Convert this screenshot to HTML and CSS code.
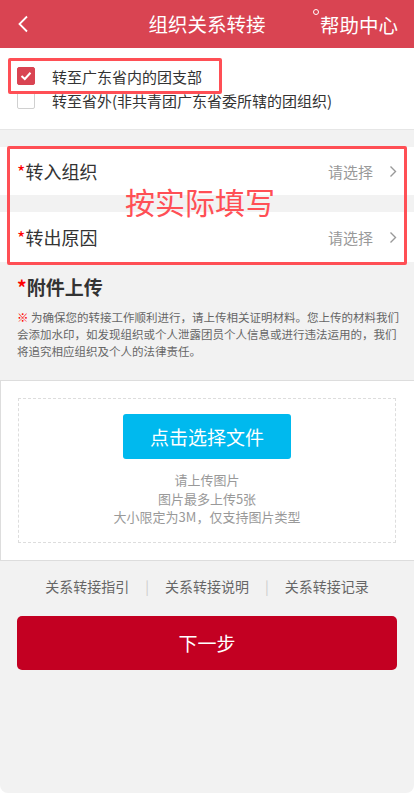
FILE: index.html
```html
<!DOCTYPE html>
<html lang="zh-CN">
<head>
<meta charset="utf-8">
<meta name="viewport" content="width=device-width, initial-scale=1">
<title>组织关系转接</title>
<link rel="stylesheet" href="styles.css">
</head>
<body>
<div class="page">
  <header class="topbar">
    <div class="back">
      <svg width="12" height="18" viewBox="0 0 12 18"><path d="M10 1.5 L2.5 9 L10 16.5" fill="none" stroke="#fff" stroke-width="1.8"/></svg>
    </div>
    <h1 class="title">组织关系转接</h1>
    <div class="help"><span class="help-dot"></span>帮助中心</div>
  </header>

  <section class="options">
    <div class="opt">
      <span class="check checked">
        <svg width="12" height="10" viewBox="0 0 12 10"><path d="M1.5 5 L4.8 8 L10.5 1.8" fill="none" stroke="#fff" stroke-width="2"/></svg>
      </span>
      <span class="opt-text">转至广东省内的团支部</span>
    </div>
    <div class="opt">
      <span class="check"></span>
      <span class="opt-text">转至省外(非共青团广东省委所辖的团组织)</span>
    </div>
    <div class="mark mark-1"></div>
  </section>

  <section class="fields">
    <div class="field">
      <span class="label"><i class="star">*</i>转入组织</span>
      <span class="pick">请选择<svg class="chev" width="8" height="13" viewBox="0 0 8 13"><path d="M1.5 1.5 L6.5 6.5 L1.5 11.5" fill="none" stroke="#999" stroke-width="1.4"/></svg></span>
    </div>
    <div class="field">
      <span class="label"><i class="star">*</i>转出原因</span>
      <span class="pick">请选择<svg class="chev" width="8" height="13" viewBox="0 0 8 13"><path d="M1.5 1.5 L6.5 6.5 L1.5 11.5" fill="none" stroke="#999" stroke-width="1.4"/></svg></span>
    </div>
    <div class="mark mark-2"></div>
    <div class="note-red">按实际填写</div>
  </section>

  <h2 class="sec-title"><i class="star">*</i>附件上传</h2>
  <p class="notice"><span class="ref">※</span> 为确保您的转接工作顺利进行，请上传相关证明材料。您上传的材料我们<br>会添加水印，如发现组织或个人泄露团员个人信息或进行违法运用的，我们<br>将追究相应组织及个人的法律责任。</p>

  <section class="upload">
    <div class="drop">
      <button class="choose" type="button">点击选择文件</button>
      <p class="tips">请上传图片<br>图片最多上传5张<br>大小限定为3M，仅支持图片类型</p>
    </div>
  </section>

  <nav class="links">
    <a>关系转接指引</a><span class="sep">|</span><a>关系转接说明</a><span class="sep">|</span><a>关系转接记录</a>
  </nav>

  <div class="next-wrap">
    <button class="next" type="button">下一步</button>
  </div>
</div>
</body>
</html>
```

FILE: styles.css
```css
* { box-sizing: border-box; }
html, body { margin: 0; padding: 0; }
body {
  background: #fff;
  font-family: "Noto Sans CJK SC", "Noto Sans", "Liberation Sans", sans-serif;
  color: #333;
}
.page {
  background: #f2f2f2;
  min-height: 793px;
  border-radius: 0 0 8px 8px;
  overflow: hidden;
}
i { font-style: normal; }

.topbar {
  height: 48px;
  background: #d94452;
  display: grid;
  grid-template-columns: 1fr auto 1fr;
  align-items: center;
  color: #fff;
}
.back { padding-left: 17px; display: flex; align-items: center; }
.title {
  margin: 0;
  font-size: 19.5px;
  font-weight: normal;
  line-height: 48px;
}
.help {
  justify-self: end;
  padding-right: 16px;
  font-size: 19.5px;
  display: flex;
  align-items: center;
  position: relative;
}
.help-dot {
  width: 6px; height: 6px;
  border: 1px solid #fff;
  border-radius: 50%;
  align-self: flex-start;
  margin-top: -1px;
  margin-right: 1px;
}

.options {
  position: relative;
  background: #fff;
  padding: 16px 0 17px 17px;
  border-bottom: 1px solid #e6e6e6;
  display: flex;
  flex-direction: column;
}
.opt {
  height: 24px;
  display: flex;
  align-items: center;
}
.check {
  width: 18px; height: 18px;
  border: 1px solid #d0d0d0;
  border-radius: 2px;
  background: #fff;
  display: flex;
  align-items: center;
  justify-content: center;
  margin-right: 17px;
  flex: none;
}
.check.checked { background: #d94452; border-color: #d94452; }
.opt-text { font-size: 15px; color: #333; }

.mark {
  position: absolute;
  border: 3px solid #ff4f55;
  border-radius: 2px;
}
.mark-1 { top: 10px; left: 8px; width: 214px; height: 36px; }

.fields {
  position: relative;
  margin-top: 17px;
  display: flex;
  flex-direction: column;
  gap: 17px;
}
.field {
  background: #fff;
  height: 48px;
  padding: 0 17px;
  display: flex;
  align-items: center;
  justify-content: space-between;
}
.field + .field { height: 50px; }
.label { font-size: 18px; color: #333; }
.star { color: #f00; }
.pick {
  font-size: 15px;
  color: #999;
  display: flex;
  align-items: center;
  gap: 16px;
}
.chev { display: block; }
.mark-2 { top: -1px; left: 7px; width: 400px; height: 119px; }
.note-red {
  position: absolute;
  left: 125px;
  top: 39px;
  font-size: 30px;
  line-height: 30px;
  color: #ff4f55;
}

.sec-title {
  margin: 12px 0 0;
  padding-left: 17px;
  font-size: 19px;
  line-height: 26px;
  font-weight: bold;
  color: #333;
}
.notice {
  margin: 9px 0 0;
  padding: 0 4px 0 17px;
  font-size: 11.5px;
  line-height: 17px;
  color: #666;
  white-space: nowrap;
}
.ref { color: #f00; }

.upload {
  margin-top: 20px;
  background: #fff;
  border-top: 1px solid #ddd;
  border-bottom: 1px solid #ddd;
  border-left: 1px solid #ddd;
  padding: 17px 18px 17px 17px;
}
.drop {
  border: 1px dashed #ddd;
  padding: 15px 0 15px;
  display: flex;
  flex-direction: column;
  align-items: center;
}
.choose {
  width: 168px;
  height: 45px;
  border: none;
  border-radius: 3px;
  background: #00b9ee;
  color: #fff;
  font-family: inherit;
  font-size: 19px;
  padding: 0;
}
.tips {
  margin: 12px 0 0;
  text-align: center;
  font-size: 13px;
  line-height: 18.5px;
  color: #999;
}

.links {
  margin-top: 15px;
  height: 20px;
  display: flex;
  justify-content: center;
  align-items: center;
  font-size: 14px;
  color: #666;
}
.links a { color: #666; }
.sep { color: #ccc; margin: 0 16px; }

.next-wrap { padding: 20px 17px 0; }
.next {
  width: 100%;
  height: 54px;
  border: none;
  border-radius: 5px;
  background: #c30022;
  color: #fff;
  font-family: inherit;
  font-size: 19px;
}
```
